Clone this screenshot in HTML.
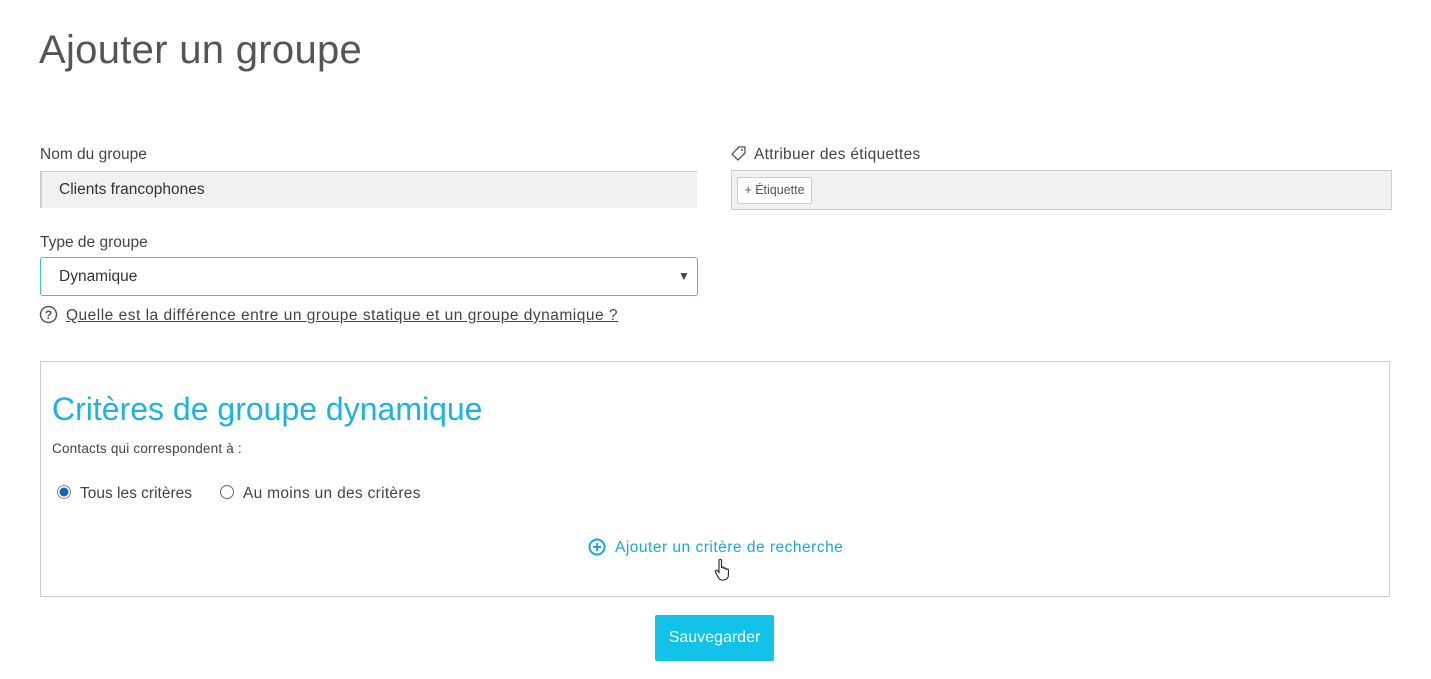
<!DOCTYPE html>
<html><head><meta charset="utf-8"><style>
body{margin:0;background:#fff;font-family:"Liberation Sans",sans-serif;color:#444;width:1431px;height:679px;overflow:hidden;position:relative}
.a{position:absolute}
h1{position:absolute;left:39px;top:28px;margin:0;font-weight:normal;font-size:40px;color:#555;letter-spacing:0.3px}
.lbl{font-size:15.5px;color:#444;top:0}
</style></head><body>
<h1>Ajouter un groupe</h1>
<div class="a lbl" style="left:40px;top:146px">Nom du groupe</div>
<div class="a" style="left:40px;top:171px;width:657px;height:37px;background:#f1f1f1;border-top:1px solid #ccc;border-left:2px solid #ccc;box-sizing:border-box"></div>
<div class="a" style="left:59px;top:181px;font-size:15.5px;color:#333">Clients francophones</div>

<svg class="a" style="left:730px;top:145px" width="18" height="18" viewBox="0 0 18 18"><path d="M2 9 L9 2 H15 V8 L8 15 Z" fill="none" stroke="#555" stroke-width="1.3" stroke-linejoin="round"/><circle cx="12" cy="5" r="1" fill="#555"/></svg>
<div class="a lbl" style="left:754px;top:146px;letter-spacing:0.3px">Attribuer des étiquettes</div>
<div class="a" style="left:731px;top:170px;width:661px;height:40px;background:#f1f1f1;border:1px solid #ccc;box-sizing:border-box"></div>
<div class="a" style="left:737px;top:177px;width:75px;height:27px;background:#fff;border:1px solid #ccc;border-radius:2px;box-sizing:border-box;font-size:12.5px;line-height:25px;text-align:center;color:#555">+ Étiquette</div>

<div class="a lbl" style="left:40px;top:234px">Type de groupe</div>
<div class="a" style="left:40px;top:257px;width:658px;height:39px;border:1px solid #3bbfe0;border-radius:3px;box-sizing:border-box"></div>
<div class="a" style="left:59px;top:268px;font-size:15.5px;color:#333">Dynamique</div>
<div class="a" style="left:678px;top:269px;font-size:12px;color:#444">▼</div>

<svg class="a" style="left:39px;top:305px" width="19" height="19"><circle cx="9.5" cy="9.5" r="8" fill="none" stroke="#555" stroke-width="1.5"/><text x="9.5" y="14" font-size="12" font-weight="bold" text-anchor="middle" fill="#555" font-family="Liberation Sans">?</text></svg>
<div class="a" style="left:66px;top:307px;font-size:15.5px;color:#444;text-decoration:underline;letter-spacing:0.5px">Quelle est la différence entre un groupe statique et un groupe dynamique ?</div>

<div class="a" style="left:40px;top:361px;width:1350px;height:236px;border:1px solid #ccc;box-sizing:border-box"></div>
<div class="a" style="left:52px;top:391px;font-size:32px;color:#1cb4de;letter-spacing:0px">Critères de groupe dynamique</div>
<div class="a" style="left:52px;top:441px;font-size:13.5px;color:#444;letter-spacing:0.2px">Contacts qui correspondent à :</div>
<svg class="a" style="left:56px;top:484px" width="16" height="16"><circle cx="8" cy="8" r="6.5" fill="#fff" stroke="#888" stroke-width="1"/><circle cx="8" cy="8" r="4.5" fill="#1565c0"/></svg>
<div class="a" style="left:80px;top:485px;font-size:15.5px">Tous les critères</div>
<svg class="a" style="left:219px;top:484px" width="16" height="16"><circle cx="8" cy="8" r="6.5" fill="#fff" stroke="#666" stroke-width="1"/></svg>
<div class="a" style="left:243px;top:485px;font-size:15.5px;letter-spacing:0.3px">Au moins un des critères</div>
<svg class="a" style="left:588px;top:538px" width="18" height="18"><circle cx="9" cy="9" r="7.5" fill="none" stroke="#1aa8d8" stroke-width="2"/><path d="M9 5V13M5 9H13" stroke="#1aa8d8" stroke-width="2"/></svg>
<div class="a" style="left:615px;top:539px;font-size:15.5px;color:#1aa8d8;letter-spacing:0.5px">Ajouter un critère de recherche</div>
<svg class="a" style="left:714px;top:558px" width="20" height="24" viewBox="0 0 20 24"><path d="M5 2.5c0-1.5 2.5-1.5 2.5 0V10c0-1.3 2.3-1.3 2.3 0v1c0-1.3 2.3-1.3 2.3 0v1c0-1.3 2.3-1.3 2.3 0v5c0 3-2 5-5 5H8c-2 0-3-1-4-3L1.5 14c-.8-1.3 1-2.5 2-1.3L5 14.5Z" fill="#fff" stroke="#222" stroke-width="1.1"/></svg>
<div class="a" style="left:655px;top:615px;width:119px;height:46px;background:#12c2e9;border-radius:2px;color:#fff;font-size:16px;line-height:46px;text-align:center">Sauvegarder</div>
</body></html>
